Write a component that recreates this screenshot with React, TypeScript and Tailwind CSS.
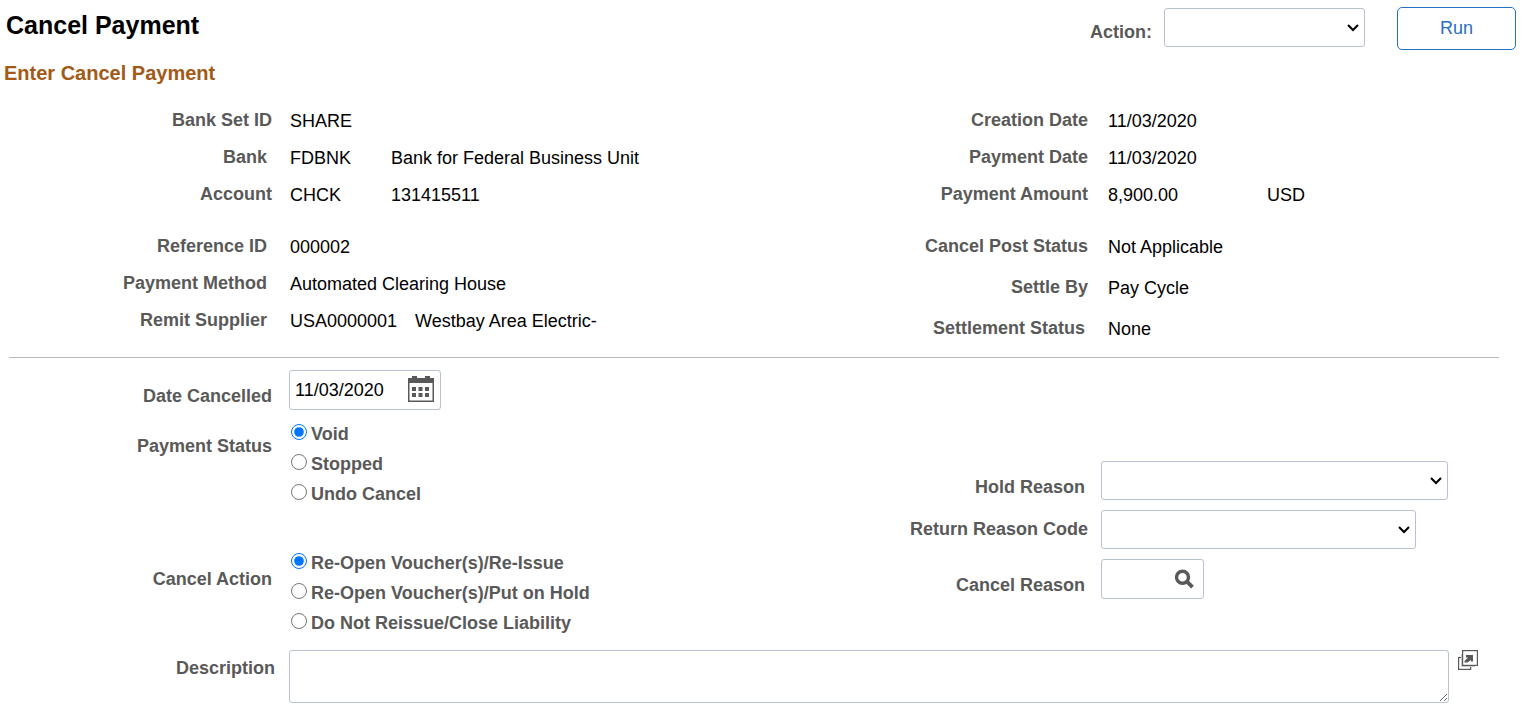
import { useState } from "react";
import type { ReactNode } from "react";

const boxClass = "rounded-[3px] border border-[#b7c1cf] bg-white";
const labelClass = "shrink-0 text-right font-bold text-[#595959]";

type FieldProps = {
  label: string;
  side: "left" | "right";
  inset?: boolean;
  children: ReactNode;
};

function InfoRow({ label, side, inset = false, children }: FieldProps) {
  const width = side === "left" ? "w-[272px] mr-[18px]" : "w-[326px] mr-5";
  const pad = inset ? (side === "left" ? "pr-[5px]" : "pr-[3px]") : "";
  return (
    <div className="flex items-start">
      <dt className={`${labelClass} leading-[22px] ${width} ${pad}`}>{label}</dt>
      <dd className="flex whitespace-nowrap leading-6 text-black">{children}</dd>
    </div>
  );
}

function SelectBox({ id, width }: { id: string; width: string }) {
  return (
    <div className={`relative ${width}`}>
      <select id={id} className={`${boxClass} block h-[39px] w-full appearance-none pl-1.5 pr-6`} />
      <svg
        viewBox="0 0 12 8"
        className="pointer-events-none absolute right-1.5 top-4 h-2 w-3"
        fill="none"
        stroke="#000"
        strokeWidth="2"
        aria-hidden="true"
      >
        <path d="M1 1l5 5 5-5" />
      </svg>
    </div>
  );
}

type RadioGroupProps = {
  label: string;
  name: string;
  options: string[];
  labelPad: string;
};

function RadioGroup({ label, name, options, labelPad }: RadioGroupProps) {
  const [selected, setSelected] = useState(options[0]);
  return (
    <div role="radiogroup" aria-labelledby={`${name}-label`} className="flex items-start">
      <span id={`${name}-label`} className={`${labelClass} mr-[19px] w-[272px] leading-6 ${labelPad}`}>
        {label}
      </span>
      <div className="flex flex-col gap-1.5">
        {options.map((option) => (
          <label key={option} className="flex items-start gap-1 whitespace-nowrap font-bold leading-6 text-[#595959]">
            <input
              type="radio"
              name={name}
              checked={selected === option}
              onChange={() => setSelected(option)}
              className="mt-0.5 size-4 shrink-0 accent-[#0075ff]"
            />
            {option}
          </label>
        ))}
      </div>
    </div>
  );
}

function CalendarIcon() {
  return (
    <svg viewBox="0 0 26 26" className="size-[26px]" fill="#595959" aria-hidden="true">
      <path d="M0 2h4V0h5v2h8V0h5v2h4v24H0zM1.500 7v17.500h23V7z" fillRule="evenodd" />
      <path d="M4 11h4v4H4zM10.500 11h4v4h-4zM17 11h4v4h-4zM4 17h4v4H4zM10.500 17h4v4h-4zM17 17h4v4h-4z" />
    </svg>
  );
}

function SearchIcon() {
  return (
    <svg viewBox="0 0 20 20" className="size-5" fill="none" stroke="#595959" aria-hidden="true">
      <circle cx="8.500" cy="8.200" r="6" strokeWidth="3.400" />
      <path d="M12.500 12.200l6 6" strokeWidth="3.800" />
    </svg>
  );
}

function ExpandIcon() {
  return (
    <svg viewBox="0 0 20 20" className="size-5" aria-hidden="true">
      <rect x="0.600" y="7.500" width="12" height="11.900" fill="#fff" stroke="#595959" strokeWidth="1.200" />
      <path d="M3.500 4v12.500H17" fill="none" stroke="#c9c9c9" />
      <rect x="4.600" y="0.600" width="14.800" height="14.800" fill="#fff" stroke="#595959" strokeWidth="1.200" />
      <path d="M8 5h7v6.500h-2V10l-3.500 2.500H6.500V11L10 7.500H8z" fill="#595959" />
    </svg>
  );
}

export default function App() {
  return (
    <main className="min-h-screen bg-white font-['Liberation_Sans',Arial,sans-serif] text-[18px]">
      <header className="flex items-start justify-between pl-1.5 pr-2 pt-[7px]">
        <h1 className="text-[25px] font-bold leading-9 text-black">Cancel Payment</h1>
        <div className="flex items-start">
          <label htmlFor="action" className={`${labelClass} mr-3 pt-3.5 leading-[22px]`}>
            Action:
          </label>
          <div className="mr-8 pt-px">
            <SelectBox id="action" width="w-[201px]" />
          </div>
          <button
            type="button"
            className="h-[43px] w-[119px] rounded-[5px] border border-solid border-[#2272c3] bg-white text-[#2a6cc4]"
          >
            Run
          </button>
        </div>
      </header>

      <h2 className="mt-[9px] pl-1 text-[20px] font-bold leading-7 text-[#a35a17]">Enter Cancel Payment</h2>

      <section className="mt-[22px] grid grid-cols-2">
        <div className="flex flex-col gap-7">
          <dl className="flex flex-col gap-[13px]">
            <InfoRow side="left" label="Bank Set ID">SHARE</InfoRow>
            <InfoRow side="left" label="Bank" inset>
              <span className="w-[101px]">FDBNK</span>
              <span>Bank for Federal Business Unit</span>
            </InfoRow>
            <InfoRow side="left" label="Account">
              <span className="w-[101px]">CHCK</span>
              <span>131415511</span>
            </InfoRow>
          </dl>
          <dl className="flex flex-col gap-[13px]">
            <InfoRow side="left" label="Reference ID" inset>000002</InfoRow>
            <InfoRow side="left" label="Payment Method" inset>Automated Clearing House</InfoRow>
            <InfoRow side="left" label="Remit Supplier" inset>
              <span className="mr-[18px]">USA0000001</span>
              <span>Westbay Area Electric-</span>
            </InfoRow>
          </dl>
        </div>
        <div className="flex flex-col gap-7">
          <dl className="flex flex-col gap-[13px]">
            <InfoRow side="right" label="Creation Date">11/03/2020</InfoRow>
            <InfoRow side="right" label="Payment Date">11/03/2020</InfoRow>
            <InfoRow side="right" label="Payment Amount">
              <span className="w-[159px]">8,900.00</span>
              <span>USD</span>
            </InfoRow>
          </dl>
          <dl className="flex flex-col gap-[17px]">
            <InfoRow side="right" label="Cancel Post Status">Not Applicable</InfoRow>
            <InfoRow side="right" label="Settle By">Pay Cycle</InfoRow>
            <InfoRow side="right" label="Settlement Status" inset>None</InfoRow>
          </dl>
        </div>
      </section>

      <hr className="ml-[9px] mr-[25px] mt-4 border-t border-[#b5b9bd]" />

      <form onSubmit={(event) => event.preventDefault()}>
        <div className="mt-3 grid grid-cols-2">
          <div className="flex flex-col">
            <div className="flex items-start">
              <label htmlFor="date-cancelled" className={`${labelClass} mr-[17px] w-[272px] pt-3.5 leading-6`}>
                Date Cancelled
              </label>
              <div className={`${boxClass} flex h-10 w-[152px] items-center justify-between pl-[5px] pr-1.5`}>
                <input
                  id="date-cancelled"
                  type="text"
                  defaultValue="11/03/2020"
                  className="w-[100px] bg-transparent leading-6 text-black outline-none"
                />
                <button type="button" aria-label="Choose a date" className="shrink-0 pb-0.5">
                  <CalendarIcon />
                </button>
              </div>
            </div>
            <div className="mt-3 flex flex-col gap-[45px]">
              <RadioGroup
                label="Payment Status"
                name="payment-status"
                options={["Void", "Stopped", "Undo Cancel"]}
                labelPad="pt-3"
              />
              <RadioGroup
                label="Cancel Action"
                name="cancel-action"
                options={[
                  "Re-Open Voucher(s)/Re-Issue",
                  "Re-Open Voucher(s)/Put on Hold",
                  "Do Not Reissue/Close Liability",
                ]}
                labelPad="pt-4"
              />
            </div>
          </div>

          <div className="flex flex-col gap-2.5 pt-[91px]">
            <div className="flex items-start">
              <label htmlFor="hold-reason" className={`${labelClass} mr-[13px] w-[326px] pr-[3px] pt-3.5 leading-6`}>
                Hold Reason
              </label>
              <SelectBox id="hold-reason" width="w-[347px]" />
            </div>
            <div className="flex items-start">
              <label htmlFor="return-reason" className={`${labelClass} mr-[13px] w-[326px] pt-[7px] leading-6`}>
                Return Reason Code
              </label>
              <SelectBox id="return-reason" width="w-[315px]" />
            </div>
            <div className="flex items-start">
              <label htmlFor="cancel-reason" className={`${labelClass} mr-[13px] w-[326px] pr-[3px] pt-3.5 leading-6`}>
                Cancel Reason
              </label>
              <div className={`${boxClass} flex h-10 w-[103px] items-center pl-[5px] pr-[9px]`}>
                <input id="cancel-reason" type="text" className="min-w-0 flex-1 bg-transparent leading-6 outline-none" />
                <button type="button" aria-label="Look up cancel reason" className="shrink-0">
                  <SearchIcon />
                </button>
              </div>
            </div>
          </div>
        </div>

        <div className="mt-[15px] flex items-start pr-[46px]">
          <label htmlFor="description" className={`${labelClass} mr-3.5 w-[275px] pt-1.5 leading-6`}>
            Description
          </label>
          <textarea id="description" className={`${boxClass} h-[53px] min-w-0 flex-1 resize p-1`} />
          <button type="button" aria-label="Open description in a larger window" className="ml-[9px] shrink-0">
            <ExpandIcon />
          </button>
        </div>
      </form>
    </main>
  );
}
